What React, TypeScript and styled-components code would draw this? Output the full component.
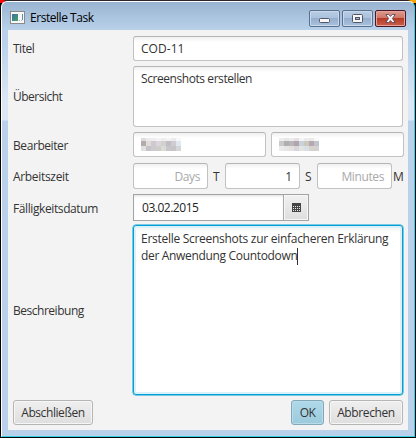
import React from "react";
import styled, { createGlobalStyle } from "styled-components";

const Global = createGlobalStyle`
  * { box-sizing: border-box; }
  html, body { margin: 0; padding: 0; background: #000; overflow: hidden; }
`;

const Desktop = styled.div`
  width: 416px;
  height: 438px;
  padding: 1px;
  background: linear-gradient(90deg, #f00 0 4px, #30242b 5px 408px, #f5a400 411px) 0 0 / 416px 3px no-repeat, #050506;
  font-family: "Open Sans", "Noto Sans", sans-serif;
  font-size: 12px;
  color: #333;
`;

const Frame = styled.div`
  width: 414px;
  height: 436px;
  border: 1px solid #fff;
  border-right-color: #2fd0e8;
  border-bottom-color: #2fd0e8;
  border-radius: 6px 6px 0 0;
  padding: 0 6px;
  background: linear-gradient(#99b4d1 0, #b9d1ea 28px, #b9d1ea 40px, #dce7f5 100px, #dce7f5 118px, #b9d1ea 119px);
`;

const TitleBar = styled.div`
  height: 28px;
  display: flex;
  align-items: flex-start;
  color: #000;
`;

const AppIcon = styled.svg`
  margin: 9px 5px 0 2px;
  flex: none;
`;

const Label = styled.span<{ $ls?: number }>`
  display: block;
  flex: none;
  letter-spacing: ${(p) => p.$ls ?? -0.2}px;
  line-height: 16px;
  white-space: nowrap;
`;

const Title = styled(Label)`
  margin-top: 8px;
  flex: 1;
`;

const WindowButtons = styled.div`
  display: flex;
  gap: 2px;
  margin: 8px 2px 0 0;
`;

const WindowButton = styled.div<{ $close?: boolean }>`
  width: 31px;
  height: 17px;
  display: flex;
  align-items: center;
  justify-content: center;
  border: 1px solid ${(p) => (p.$close ? "#4a1727" : "#59708f")};
  border-radius: 2px;
  box-shadow: inset 0 0 0 1px ${(p) => (p.$close ? "#e5a399" : "#c9d9eb")};
  background: ${(p) =>
    p.$close
      ? "linear-gradient(#dc9c8f 0, #cf7466 48%, #b63a25 50%, #c9604b 100%)"
      : "linear-gradient(#b9cde4 0, #aac1dc 48%, #94aecd 50%, #a9c2de 100%)"};
`;

const Content = styled.div`
  height: 400px;
  padding: 6px 5px 0 5px;
  background: #f3f3f3;
`;

const Row = styled.div<{ $h: number; $gap: number }>`
  display: flex;
  align-items: center;
  height: ${(p) => p.$h}px;
  margin-bottom: ${(p) => p.$gap}px;
`;

const RowLabel = styled(Label)<{ $low?: boolean }>`
  width: 120px;
  padding-top: ${(p) => (p.$low ? 2 : 0)}px;
`;

const Field = styled.div<{ $w: number; $right?: boolean; $prompt?: boolean; $area?: boolean; $low?: boolean }>`
  width: ${(p) => p.$w}px;
  height: 100%;
  flex: none;
  display: flex;
  align-items: ${(p) => (p.$area ? "flex-start" : "center")};
  justify-content: ${(p) => (p.$right ? "flex-end" : "flex-start")};
  padding: ${(p) => (p.$area ? "4px 7px" : p.$low ? "2px 7px 0" : "0 7px")};
  border: 1px solid #c2c2c2;
  border-top-color: #b5b5b5;
  border-radius: 3px;
  background: linear-gradient(#f0f0f0, #fff 5px);
  color: ${(p) => (p.$prompt ? "#a9a9a9" : "#333")};
`;

const Unit = styled.div<{ $w: number; $pad: number }>`
  width: ${(p) => p.$w}px;
  padding: 2px 0 0 ${(p) => p.$pad}px;
  flex: none;
`;

const DatePicker = styled.div`
  width: 176px;
  height: 27px;
  display: flex;
  border: 1px solid #a3a3a3;
  background: #fff;
  color: #222;
`;

const DateText = styled.div`
  width: 149px;
  padding: 5px 7px 0 8px;
  box-shadow: inset 0 2px 3px -1px #ddd;
`;

const DateButton = styled.div`
  flex: 1;
  display: flex;
  align-items: center;
  justify-content: center;
  border-left: 1px solid #aaa;
  background: linear-gradient(#f1f1f1, #dedede);
  box-shadow: inset 0 0 0 1px #f6f6f6;
`;

const FocusedArea = styled.div`
  width: 270px;
  height: 170px;
  flex: none;
  padding: 5px 7px;
  border: 1px solid #039ed3;
  border-radius: 3px;
  box-shadow: 0 0 0 0.5px #039ed3, inset 0 0 0 2px #d9f1f9;
  background: linear-gradient(#f0f0f0, #fff 7px);
`;

const AreaLine = styled.div`
  display: flex;
  height: 17px;
`;

const Caret = styled.span`
  width: 1px;
  height: 17px;
  background: #333;
`;

const Footer = styled.div`
  display: flex;
  height: 25px;
  margin-top: 5px;
`;

const Button = styled.div<{ $w: number; $primary?: boolean }>`
  width: ${(p) => p.$w}px;
  height: 25px;
  display: flex;
  align-items: center;
  justify-content: center;
  border: 1px solid ${(p) => (p.$primary ? "#82a8b8" : "#b5b5b5")};
  border-radius: 3px;
  box-shadow: inset 0 0 0 1px ${(p) => (p.$primary ? "#b8dcea" : "#f6f6f6")};
  background: ${(p) => (p.$primary ? "linear-gradient(#afd9e9, #9ccadc)" : "linear-gradient(#efefef, #dedede)")};
`;

const Spacer = styled.div`
  flex: 1;
`;

const Gap = styled.div`
  width: 5px;
  flex: none;
`;

const Mosaic = ({ rows }: { rows: string[][] }) => (
  <svg width="40" height="13" viewBox="0 0 40 13" shapeRendering="crispEdges">
    {rows.map((r, y) =>
      r.map((c, x) => <rect key={`${x}-${y}`} x={x * 5} y={[0, 3, 8][y]} width="5" height={[3, 5, 5][y]} fill={c} />)
    )}
  </svg>
);

const firstName = [
  ["#dddbdc", "#ebebeb", "#eeeef0", "#f3f3f3", "#eeeeee", "#f3f3f1", "#e9ebef", "#f6f7f9"],
  ["#b5abae", "#dddcd9", "#cfc9cf", "#dad6dc", "#d2cfce", "#bdbfc2", "#cfcbd0", "#e0e7ef"],
  ["#e0e0e0", "#c5c3c9", "#cfc8cc", "#cfcccc", "#d9dcd3", "#cac4cc", "#c6c4c5", "#d3d5d9"],
];
const lastName = [
  ["#ededed", "#e7e7e7", "#ecebed", "#e3e1e2", "#f5f5f5", "#ececee", "#eaeaea", "#f8f8f8"],
  ["#c9c8cc", "#b1aeb0", "#b9b6b9", "#b3a3ab", "#c8d2da", "#c9cabd", "#b9a7af", "#c1c4cb"],
  ["#ebebe8", "#e6e6e6", "#e5e0dd", "#d8d5dc", "#e2e4e0", "#d9dfe6", "#d8d1cd", "#d2d2d2"],
];

const Calendar = () => (
  <svg width="9" height="9" viewBox="0 0 9 9" shapeRendering="crispEdges">
    <path fill="#444" d="M0 0h9v9h-9z" />
    {[3, 5, 7].map((y) => [1, 3, 5, 7].map((x) => <rect key={`${x}${y}`} x={x} y={y} width="1" height="1" fill="#e5e5e5" />))}
  </svg>
);

export default function App() {
  return (
    <Desktop>
      <Global />
      <Frame>
        <TitleBar>
          <AppIcon width="15" height="13" viewBox="0 0 15 13">
            <defs>
              <linearGradient id="screen" x2="1" y2="1">
                <stop offset="0" stopColor="#3c6fa0" />
                <stop offset="1" stopColor="#46a36c" />
              </linearGradient>
            </defs>
            <rect x=".5" y=".5" width="14" height="12" fill="#f7f7f7" stroke="#8a8a8a" />
            <rect x="2" y="3" width="6" height="7" fill="url(#screen)" />
            <path fill="#a9b5c0" d="M9 9h1v1h-1zM11 9h1v1h-1z" />
            <rect x="12" y="3" width="1" height="6" fill="#5c8ea5" />
          </AppIcon>
          <Title $ls={-0.46}>Erstelle Task</Title>
          <WindowButtons>
            <WindowButton>
              <svg width="11" height="13" viewBox="0 0 11 13">
                <rect x=".5" y="6.5" width="10" height="4" rx="1" fill="#f7f7f7" stroke="#535666" />
              </svg>
            </WindowButton>
            <WindowButton>
              <svg width="11" height="9" viewBox="0 0 11 9">
                <rect x=".5" y=".5" width="10" height="8" rx="1" fill="#f7f7f7" stroke="#535666" />
                <rect x="3.5" y="3.5" width="4" height="2" fill="#9db5d0" stroke="#535666" />
              </svg>
            </WindowButton>
            <WindowButton $close>
              <svg width="11" height="9" viewBox="0 0 11 9">
                <path
                  d="M.8.5h3l1.700 1.900L7.200.5h3L7.400 4.500l2.800 4h-3L5.500 6.600 3.800 8.500h-3l2.800-4z"
                  fill="#f5f5f5"
                  stroke="#5b4b5c"
                  strokeWidth=".9"
                />
              </svg>
            </WindowButton>
          </WindowButtons>
        </TitleBar>
        <Content>
          <Row $h={25} $gap={5}>
            <RowLabel $ls={-0.5}>Titel</RowLabel>
            <Field $w={270}><Label $ls={0.05}>COD-11</Label></Field>
          </Row>
          <Row $h={61} $gap={5}>
            <RowLabel $ls={-0.5}>Übersicht</RowLabel>
            <Field $w={270} $area><Label $ls={-0.43}>Screenshots erstellen</Label></Field>
          </Row>
          <Row $h={25} $gap={6}>
            <RowLabel $low $ls={-0.42}>Bearbeiter</RowLabel>
            <Field $w={133}><Mosaic rows={firstName} /></Field>
            <Gap />
            <Field $w={133}><Mosaic rows={lastName} /></Field>
          </Row>
          <Row $h={26} $gap={5}>
            <RowLabel $low $ls={-0.32}>Arbeitszeit</RowLabel>
            <Field $w={75} $right $prompt $low><Label $ls={-0.4}>Days</Label></Field>
            <Unit $w={17} $pad={5}><Label>T</Label></Unit>
            <Field $w={75} $right $low><Label>1</Label></Field>
            <Unit $w={17} $pad={5}><Label>S</Label></Unit>
            <Field $w={75} $right $prompt $low><Label $ls={-0.38}>Minutes</Label></Field>
            <Unit $w={12} $pad={1}><Label>M</Label></Unit>
          </Row>
          <Row $h={27} $gap={4}>
            <RowLabel $low $ls={-0.4}>Fälligkeitsdatum</RowLabel>
            <DatePicker>
              <DateText><Label $ls={-0.48}>03.02.2015</Label></DateText>
              <DateButton><Calendar /></DateButton>
            </DatePicker>
          </Row>
          <Row $h={170} $gap={0}>
            <RowLabel $low $ls={-0.48}>Beschreibung</RowLabel>
            <FocusedArea>
              <AreaLine><Label $ls={-0.28}>Erstelle Screenshots zur einfacheren Erklärung</Label></AreaLine>
              <AreaLine><Label $ls={-0.33}>der Anwendung Countodown</Label><Caret /></AreaLine>
            </FocusedArea>
          </Row>
          <Footer>
            <Button $w={80}><Label $ls={-0.42}>Abschließen</Label></Button>
            <Spacer />
            <Button $w={33} $primary><Label $ls={-0.6}>OK</Label></Button>
            <Gap />
            <Button $w={74}><Label $ls={-0.38}>Abbrechen</Label></Button>
          </Footer>
        </Content>
      </Frame>
    </Desktop>
  );
}
